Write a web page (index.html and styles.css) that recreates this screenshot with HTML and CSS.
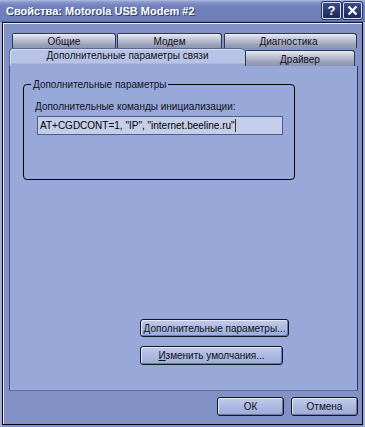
FILE: index.html
```html
<!DOCTYPE html>
<html>
<head>
<meta charset="utf-8">
<link rel="stylesheet" href="styles.css">
</head>
<body>
<div class="window">
  <div class="titlebar">
    <span class="title">Свойства: Motorola USB Modem #2</span>
    <div class="tbtns">
      <span class="tbtn help">?</span>
      <span class="tbtn close"><svg width="11" height="11" viewBox="0 0 11 11"><path d="M1.5 1.5 L9.5 9.5 M9.5 1.5 L1.5 9.5" stroke="#fff" stroke-width="2.2" fill="none"/></svg></span>
    </div>
  </div>
  <div class="frame">
    <div class="tabs-back">
      <div class="tab t1">Общие</div>
      <div class="tab t2">Модем</div>
      <div class="tab t3">Диагностика</div>
    </div>
    <div class="tabs-front">
      <div class="tab sel">Дополнительные параметры связи</div>
      <div class="tab t4">Драйвер</div>
    </div>
    <div class="panel">
      <fieldset class="group">
        <legend>Дополнительные параметры</legend>
        <div class="lbl"><u>Д</u>ополнительные команды инициализации:</div>
        <div class="input"><span>AT+CGDCONT=1, "IP", "internet.beeline.ru"</span><span class="caret"></span></div>
      </fieldset>
      <div class="pbtns">
        <div class="btn b1"><span><u>Д</u>ополнительные параметры...</span></div>
        <div class="btn b2"><span><u>И</u>зменить умолчания...</span></div>
      </div>
    </div>
    <div class="footer">
      <div class="btn fb"><span>ОК</span></div>
      <div class="btn fb"><span>Отмена</span></div>
    </div>
  </div>
</div>
</body>
</html>
```
FILE: styles.css
```css
html, body { margin: 0; padding: 0; }
body { background: #8292c6; font-family: "Liberation Sans", Arial, sans-serif; font-size: 10px; color: #101018; }
.window { width: 365px; height: 427px; box-sizing: border-box; display: flex; flex-direction: column; background: #8292c6; border-left: 2px solid #a4b0da; border-right: 2px solid #a4b0da; }
.titlebar { height: 22px; box-sizing: border-box; margin: 0 -2px; display: flex; align-items: center; justify-content: space-between; padding: 0 3px 0 6px; background: linear-gradient(#b4bee0 0, #8a98cc 2px, #7080ba 6px, #6e7eb8 100%); border-bottom: 1px solid #5a68a0; }
.title { color: #fff; font-weight: bold; font-size: 11px; text-shadow: 1px 1px 0 #303c70; }
.tbtns { display: flex; gap: 2px; }
.tbtn { width: 17px; height: 15px; border: 1px solid #d8def4; border-radius: 2px; background: linear-gradient(#3c4c88, #1c2858); display: flex; align-items: center; justify-content: center; color: #fff; font-weight: bold; font-size: 13px; box-shadow: 0 0 0 1px #283468; }
.frame { flex: 1; display: flex; flex-direction: column; border: 1px solid #000; box-shadow: inset 1px 1px 0 #e8ecf8; padding: 10px 4px 0 6px; margin-bottom: 2px; box-sizing: border-box; border-top-color: #101830; }
.tabs-back { display: flex; height: 15px; gap: 1px; padding-left: 3px; }
.tab { box-sizing: border-box; display: flex; align-items: center; justify-content: center; white-space: nowrap; }
.tabs-back .tab { height: 15px; background: linear-gradient(#eceef4 0, #d0d4e2 3px, #b4bacc 7px, #9aa0b8 11px, #8c94b0 100%); border: 1px solid #303850; border-bottom: none; border-radius: 2px 3px 0 0; padding-top: 1px; }
.t1 { width: 104px; }
.t2 { width: 105px; }
.t3 { width: 133px; margin-left: 1px; padding-right: 4px; }
.tabs-front { display: flex; height: 18px; align-items: flex-start; }
.sel { width: 236px; height: 18px; background: linear-gradient(#b8c4e6 0, #b6c2e6 14px, #98a8d8 15px); border: 1px solid #5a6690; border-bottom: none; border-right: none; border-radius: 4px 5px 0 0; padding-bottom: 4px; box-shadow: inset 1px 1px 0 #d8def2; }
.t4 { width: 110px; height: 16px; margin-top: 2px; background: linear-gradient(#eceef4 0, #d0d4e2 3px, #b4bacc 7px, #9aa0b8 11px, #8c94b0 100%); border: 1px solid #303850; border-bottom: none; border-radius: 2px 3px 0 0; padding-top: 1px; }
.panel { height: 325px; box-sizing: border-box; background: #98a8d8; border-left: 1px solid #3c4878; border-right: 1px solid #2c3660; border-bottom: 1px solid #5c6a9c; display: flex; flex-direction: column; }
.group { margin: 12px 0 0 13px; padding: 0 0 0 11px; width: 272px; height: 102px; box-sizing: border-box; border: 1px solid #000; border-radius: 4px; }
.group legend { margin-left: -4px; padding: 0 2px; line-height: 13px; }
.lbl { margin-top: 9px; line-height: 13px; }
.lbl u, .btn u { text-decoration: underline; }
.input { margin: 3px 0 0 2px; width: 246px; height: 19px; box-sizing: border-box; background: #c4cde9; border: 1px solid #505c88; display: flex; align-items: center; padding-left: 2px; font-size: 10px; white-space: nowrap; color: #000; }
.caret { display: inline-block; width: 1px; height: 13px; background: #4a3010; margin-left: 0; }
.pbtns { display: flex; flex-direction: column; gap: 9px; margin: 139px 0 0 130px; }
.btn { box-sizing: border-box; height: 19px; display: flex; align-items: center; justify-content: center; white-space: nowrap; border: 1px solid #101828; border-radius: 3px; background: linear-gradient(#c4cce8 0, #b0bce2 40%, #9cacdb 100%); box-shadow: inset 1px 1px 0 #e4e8f6, inset -1px -1px 0 #6a78a8; }
.b1 { width: 149px; height: 18px; }
.b2 { width: 143px; }
.footer { display: flex; justify-content: flex-end; gap: 7px; margin-top: 6px; }
.fb { width: 67px; }
```
